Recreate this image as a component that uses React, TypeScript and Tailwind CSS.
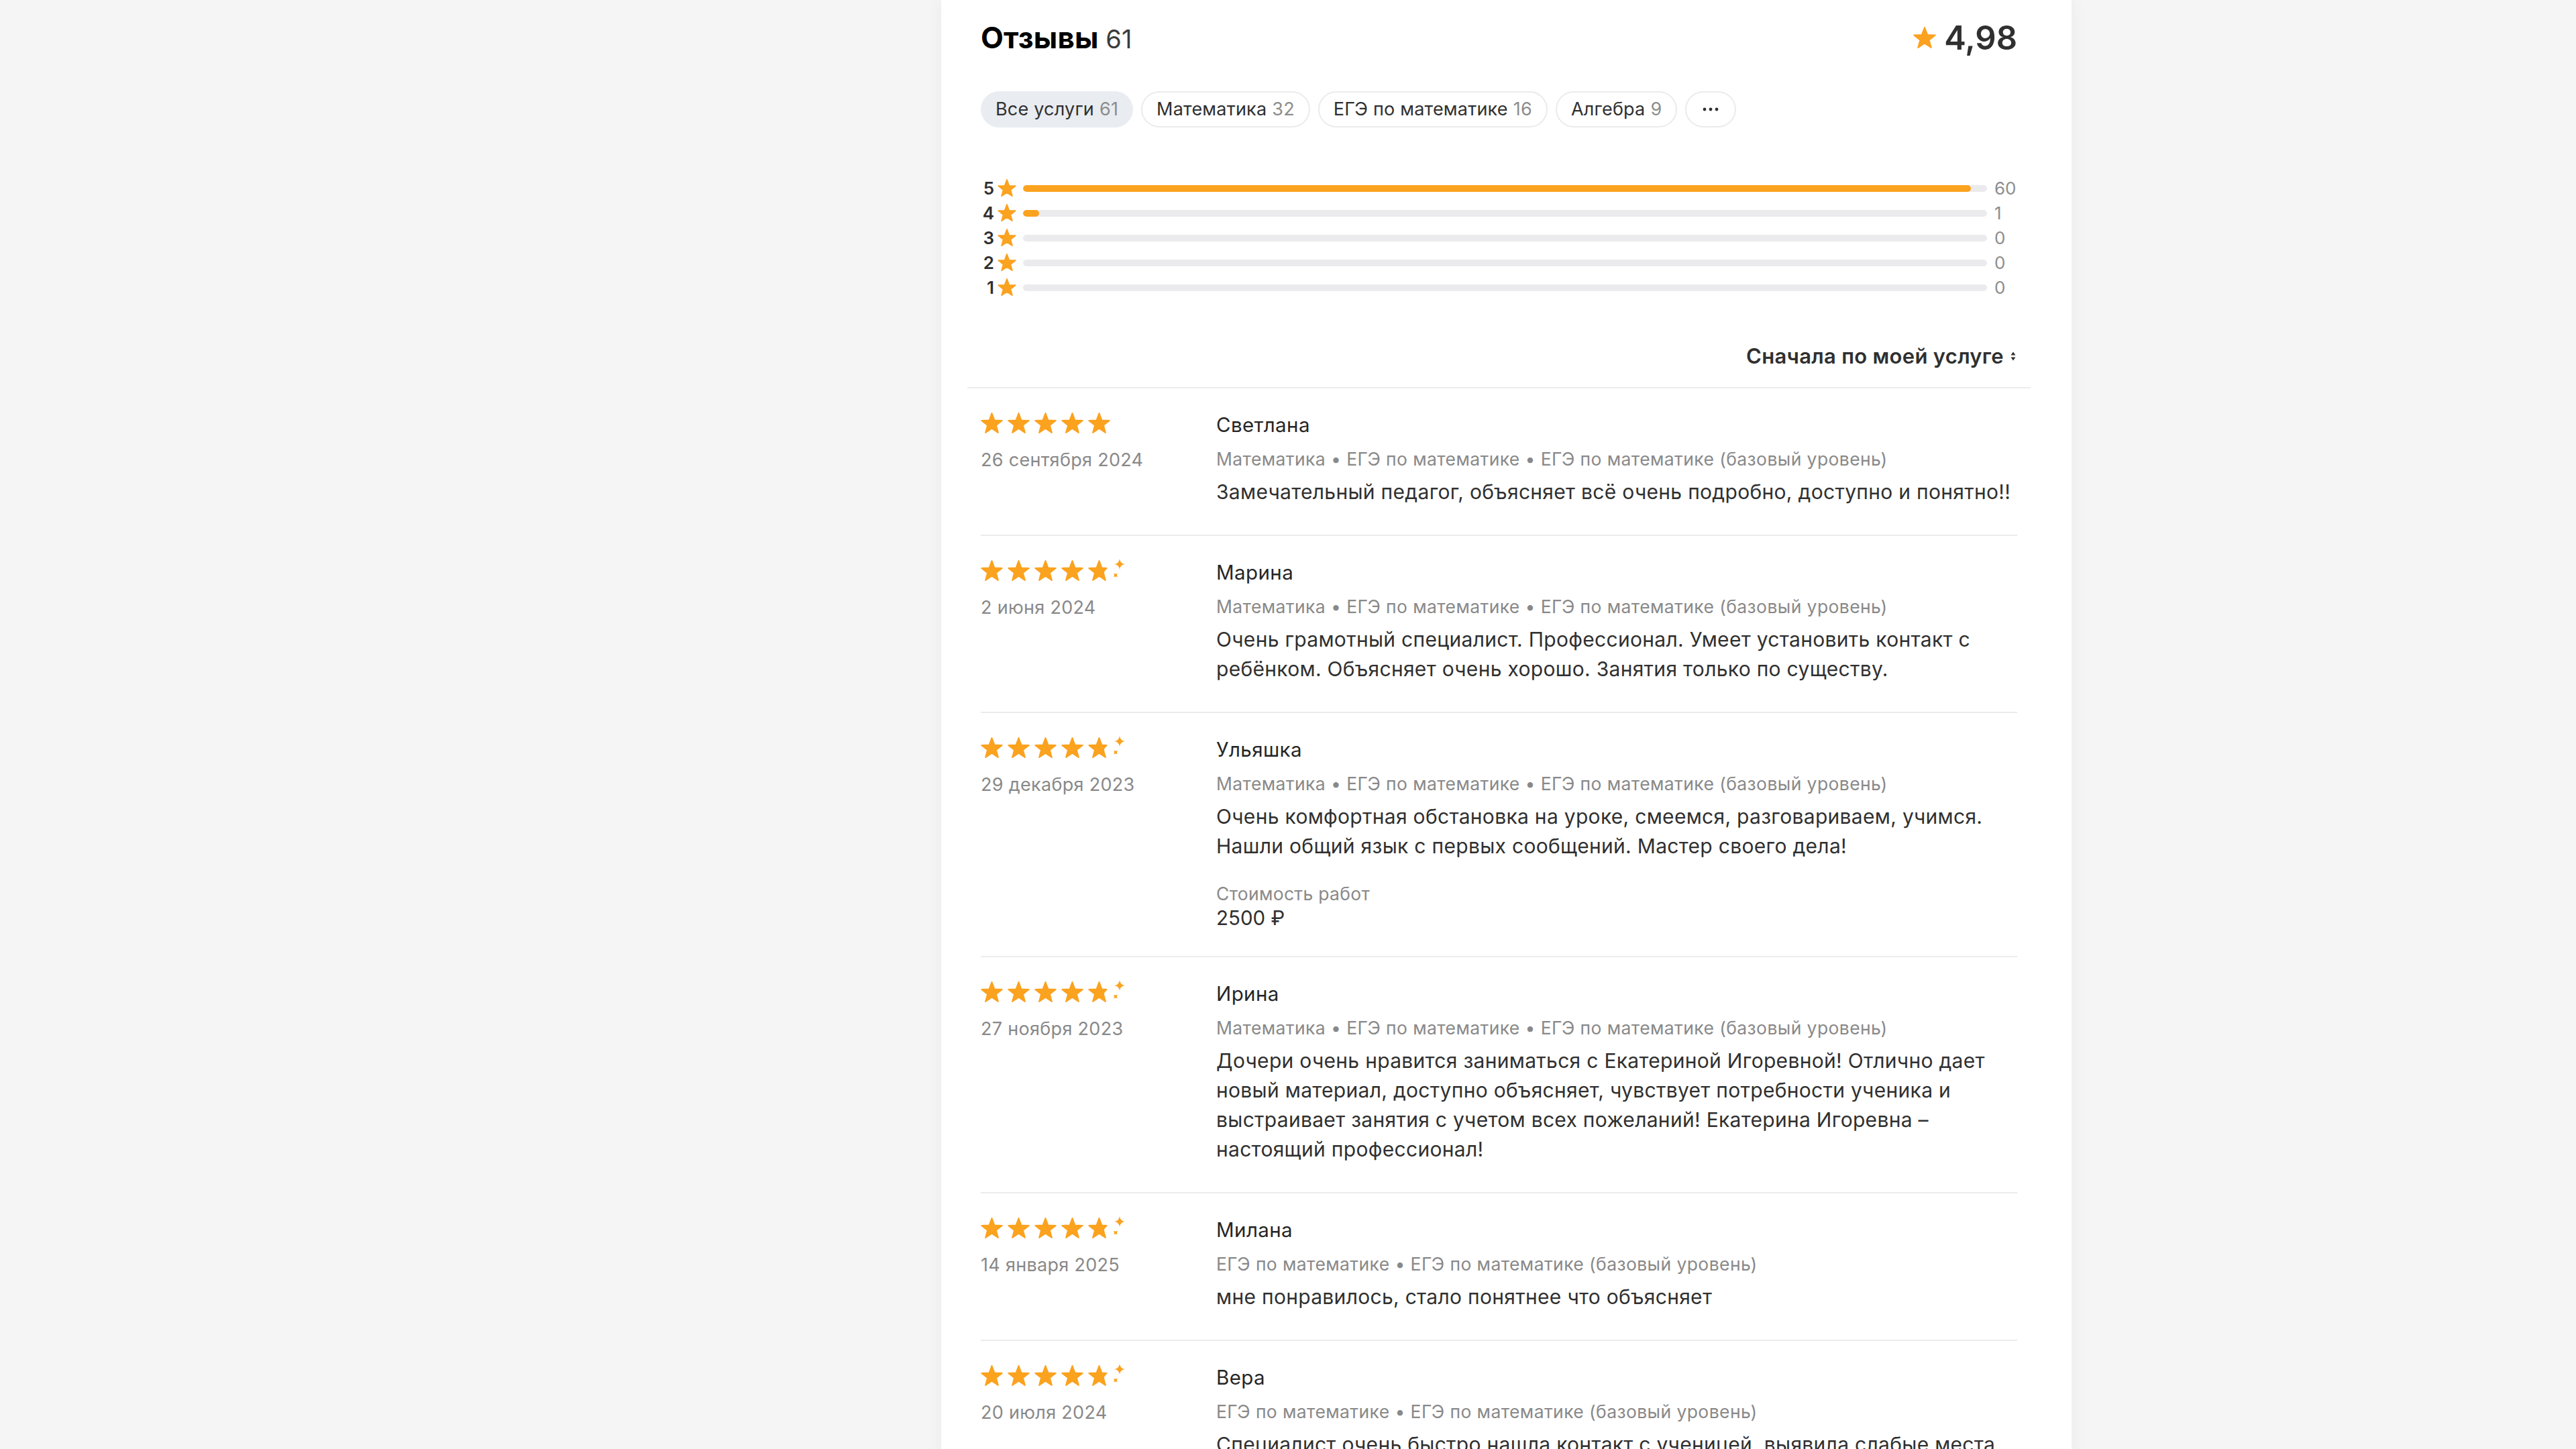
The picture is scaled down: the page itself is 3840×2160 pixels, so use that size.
import React from "react";

const STAR =
  "M16.5 1 L20.45 11.56 L31.72 12.06 L22.89 19.08 L25.9 29.94 L16.5 23.72 L7.1 29.94 L10.11 19.08 L1.28 12.06 L12.55 11.56 Z";
const STAR_CUT =
  "M16.5 1 L20.45 11.56 L27.6 11.9 L25.2 14.6 L23.6 16.2 L22.89 19.08 L25.9 29.94 L16.5 23.72 L7.1 29.94 L10.11 19.08 L1.28 12.06 L12.55 11.56 Z";
const OR = "#fba21f";

function Star({ className }: { className: string }) {
  return (
    <svg viewBox="0 0 33 32" className={className}>
      <path d={STAR} fill={OR} stroke={OR} strokeWidth="2" strokeLinejoin="round" />
    </svg>
  );
}

function PartialStar() {
  return (
    <svg viewBox="0 0 56 32" className="w-[56px] h-[32px] overflow-visible">
      <path d={STAR_CUT} fill={OR} stroke={OR} strokeWidth="2" strokeLinejoin="round" />
      <path d="M47 -2 Q47.9 5.1 55 6 Q47.9 6.9 47 14 Q46.1 6.9 39 6 Q46.1 5.1 47 -2Z" fill={OR} />
      <path
        d="M41 18.2 Q41.6 21.9 45.3 22.5 Q41.6 23.1 41 26.8 Q40.4 23.1 36.7 22.5 Q40.4 21.9 41 18.2Z"
        fill={OR}
        transform="rotate(45 41 22.5)"
      />
    </svg>
  );
}

function Stars({ full }: { full: boolean }) {
  return (
    <div className="flex items-center gap-[7px] h-[32px]">
      <Star className="w-[33px] h-[32px]" />
      <Star className="w-[33px] h-[32px]" />
      <Star className="w-[33px] h-[32px]" />
      <Star className="w-[33px] h-[32px]" />
      {full ? <Star className="w-[33px] h-[32px]" /> : <PartialStar />}
    </div>
  );
}

type Review = {
  name: string;
  date: string;
  meta: string;
  lines: string[];
  full: boolean;
  price?: string;
};

const reviews: Review[] = [
  {
    name: "Светлана",
    date: "26 сентября 2024",
    meta: "Математика • ЕГЭ по математике • ЕГЭ по математике (базовый уровень)",
    lines: ["Замечательный педагог, объясняет всё очень подробно, доступно и понятно!!"],
    full: true,
  },
  {
    name: "Марина",
    date: "2 июня 2024",
    meta: "Математика • ЕГЭ по математике • ЕГЭ по математике (базовый уровень)",
    lines: [
      "Очень грамотный специалист. Профессионал. Умеет установить контакт с",
      "ребёнком. Объясняет очень хорошо. Занятия только по существу.",
    ],
    full: false,
  },
  {
    name: "Ульяшка",
    date: "29 декабря 2023",
    meta: "Математика • ЕГЭ по математике • ЕГЭ по математике (базовый уровень)",
    lines: [
      "Очень комфортная обстановка на уроке, смеемся, разговариваем, учимся.",
      "Нашли общий язык с первых сообщений. Мастер своего дела!",
    ],
    full: false,
    price: "2500 ₽",
  },
  {
    name: "Ирина",
    date: "27 ноября 2023",
    meta: "Математика • ЕГЭ по математике • ЕГЭ по математике (базовый уровень)",
    lines: [
      "Дочери очень нравится заниматься с Екатериной Игоревной! Отлично дает",
      "новый материал, доступно объясняет, чувствует потребности ученика и",
      "выстраивает занятия с учетом всех пожеланий! Екатерина Игоревна –",
      "настоящий профессионал!",
    ],
    full: false,
  },
  {
    name: "Милана",
    date: "14 января 2025",
    meta: "ЕГЭ по математике • ЕГЭ по математике (базовый уровень)",
    lines: ["мне понравилось, стало понятнее что объясняет"],
    full: false,
  },
  {
    name: "Вера",
    date: "20 июля 2024",
    meta: "ЕГЭ по математике • ЕГЭ по математике (базовый уровень)",
    lines: [
      "Специалист очень быстро нашла контакт с ученицей, выявила слабые места",
      "и помогла их проработать. Рекомендую!",
    ],
    full: false,
  },
];

const bars = [
  { n: 5, c: 60 },
  { n: 4, c: 1 },
  { n: 3, c: 0 },
  { n: 2, c: 0 },
  { n: 1, c: 0 },
];

const chips = [
  { t: "Все услуги", c: "61", active: true },
  { t: "Математика", c: "32" },
  { t: "ЕГЭ по математике", c: "16" },
  { t: "Алгебра", c: "9" },
];

export default function App() {
  return (
    <div className="min-h-screen bg-[#f5f5f5] font-['Inter',sans-serif] text-[#303030]">
      <div className="ml-[1403px] w-[1685px] min-h-screen bg-white shadow-[0_0_24px_rgba(0,0,0,0.05)] pl-[59px] pr-[81px] pt-[28px]">
        {/* header */}
        <div className="flex items-center justify-between h-[56px]">
          <h2 className="text-[44px] leading-none font-bold text-black tracking-[0.2px]">
            Отзывы <span className="text-[38px] font-normal text-[#3c3c3c]">61</span>
          </h2>
          <div className="flex items-center gap-[12px]">
            <Star className="w-[34px] h-[33px]" />
            <span className="text-[49px] leading-none font-semibold text-[#303030]">4,98</span>
          </div>
        </div>

        {/* chips */}
        <div className="flex items-center gap-[12px] mt-[52px]">
          {chips.map((ch) => (
            <div
              key={ch.t}
              className={
                ch.active
                  ? "h-[54px] px-[22px] rounded-full bg-[#e9ecf1] flex items-center text-[27px] tracking-[0.2px] text-[#303030]"
                  : "h-[54px] px-[21px] rounded-full border-2 border-[#ebebeb] flex items-center text-[27px] tracking-[0.2px] text-[#303030]"
              }
            >
              {ch.t}
              <span className="ml-[8px] text-[#8d8d8d]">{ch.c}</span>
            </div>
          ))}
          <div className="h-[54px] w-[76px] rounded-full border-2 border-[#ebebeb] flex items-center justify-center">
            <svg viewBox="0 0 24 6" className="w-[24px] h-[6px]">
              <circle cx="3" cy="3" r="2.4" fill="#303030" />
              <circle cx="12" cy="3" r="2.4" fill="#303030" />
              <circle cx="21" cy="3" r="2.4" fill="#303030" />
            </svg>
          </div>
        </div>

        {/* rating bars */}
        <div className="mt-[72px] flex flex-col">
          {bars.map((b) => (
            <div key={b.n} className="flex items-center h-[37px]">
              <span className="w-[20px] text-right text-[26px] font-semibold text-[#303030] leading-none">{b.n}</span>
              <Star className="ml-[5px] w-[28px] h-[27px]" />
              <div className="ml-[10px] flex-1 h-[10px] rounded-full bg-[#ebebee] overflow-hidden">
                <div className="h-full rounded-full bg-[#fba21f]" style={{ width: `${(b.c / 61) * 100}%` }} />
              </div>
              <span className="ml-[11px] w-[34px] text-[26px] text-[#8d8d8d] leading-none">{b.c}</span>
            </div>
          ))}
        </div>

        {/* sort */}
        <div className="mt-[64px] h-[40px] flex items-center justify-end">
          <span className="text-[31px] font-semibold tracking-[0.3px] text-[#303030]">Сначала по моей услуге</span>
          <svg viewBox="0 0 12 20" className="ml-[8px] w-[12px] h-[20px]">
            <path d="M6 3.5 L9.5 8.5 L2.5 8.5Z" fill="#303030" />
            <path d="M6 16.5 L9.5 11.5 L2.5 11.5Z" fill="#303030" />
          </svg>
        </div>
        <div className="mt-[26px] -mx-[20px] h-[2px] bg-[#ececec]" />

        {/* reviews */}
        <div className="flex flex-col">
          {reviews.map((r) => (
            <div key={r.name} className="flex border-b-2 border-[#ececec] pt-[32px] pb-[42px]">
              <div className="w-[351px] shrink-0 pt-[4px]">
                <Stars full={r.full} />
                <div className="mt-[21px] text-[27px] tracking-[0.3px] leading-[36px] text-[#898989]">{r.date}</div>
              </div>
              <div className="flex-1 min-w-0">
                <div className="text-[29.5px] tracking-[0.4px] leading-[44px] text-[#262626]">{r.name}</div>
                <div className="mt-[11px] text-[26.5px] tracking-[0.4px] leading-[36px] text-[#898989]">{r.meta}</div>
                <div className="mt-[9px] text-[30px] tracking-[0.3px] leading-[44px] text-[#303030]">
                  {r.lines.map((l, i) => (
                    <div key={i} className="whitespace-nowrap">
                      {l}
                    </div>
                  ))}
                </div>
                {r.price && (
                  <div className="mt-[34px]">
                    <div className="text-[26.5px] tracking-[0.3px] leading-[30px] text-[#898989]">Стоимость работ</div>
                    <div className="mt-[6px] text-[29.5px] leading-[30px] text-[#303030]">{r.price}</div>
                  </div>
                )}
              </div>
            </div>
          ))}
        </div>
      </div>
    </div>
  );
}
